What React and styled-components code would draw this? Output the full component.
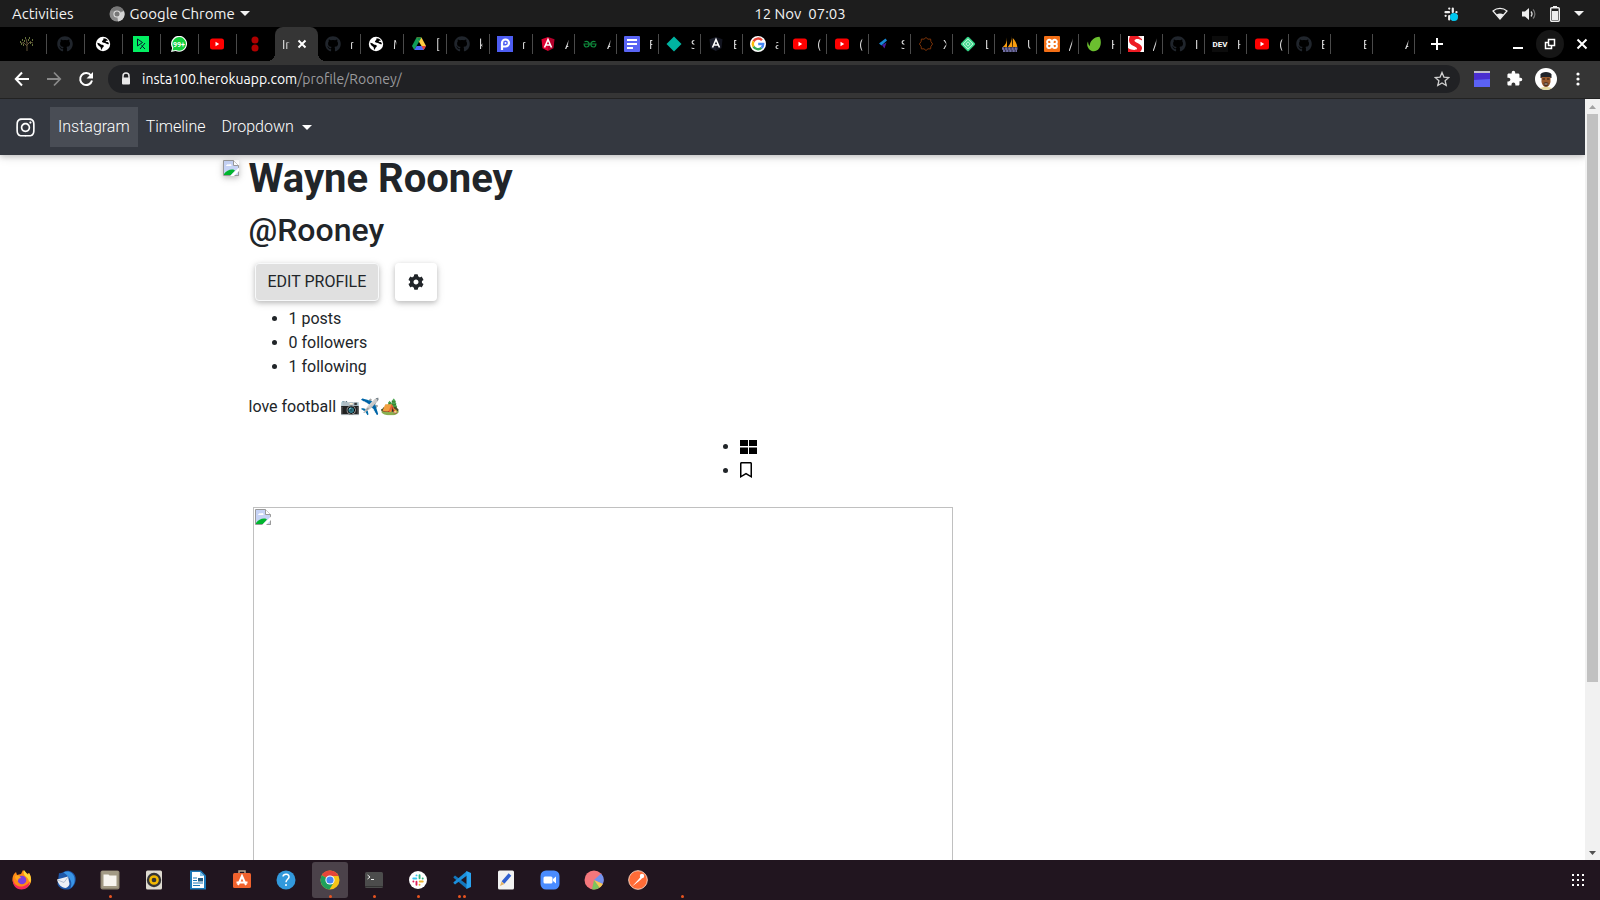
import React from "react";
import styled, { createGlobalStyle, css } from "styled-components";
import { FaGithub, FaInstagram, FaCog, FaRegBookmark } from "react-icons/fa";
import { MdExtension } from "react-icons/md";

const GlobalStyle = createGlobalStyle`
  *, *::before, *::after { box-sizing: border-box; }
  body { margin: 0; background: #fff; }
  button { font: inherit; color: inherit; border: 0; padding: 0; background: none; cursor: pointer; }
  svg { display: block; flex: none; }
`;

const uiFont = `Ubuntu, "Noto Sans", "Open Sans", sans-serif`;

const Desktop = styled.div`
  display: flex;
  flex-direction: column;
  height: 100vh;
  overflow: hidden;
  font-family: ${uiFont};
`;

/* ---------- system bar ---------- */

const SystemBar = styled.header`
  flex: none;
  display: grid;
  grid-template-columns: 1fr auto 1fr;
  align-items: center;
  height: 27px;
  padding: 0 12px;
  background: #1d1d1d;
  color: #f2f2f2;
  font-size: 15px;
  line-height: 20px;
`;

const SystemGroup = styled.div`
  display: flex;
  align-items: center;
  gap: ${(p) => p.$gap}px;
  justify-content: ${(p) => (p.$end ? "flex-end" : "flex-start")};
  padding-right: ${(p) => (p.$end ? 4 : 0)}px;
`;

const SystemButton = styled.button`
  display: flex;
  align-items: center;
  gap: 5px;
  white-space: pre;
`;

const TrayApp = styled.span`
  margin-right: 20px;
`;

/* ---------- tab strip ---------- */

const TabStrip = styled.div`
  flex: none;
  display: flex;
  align-items: stretch;
  height: 34px;
  padding-left: 9px;
  background: #000;
  color: #e4e4e4;
  font-size: 13px;
`;

const Tab = styled.button`
  flex: none;
  display: flex;
  align-items: center;
  gap: 9px;
  width: ${(p) => p.$width}px;
  height: 20px;
  margin-top: 7px;
  padding-left: ${(p) => (p.$pinned ? 10 : 7)}px;
  border-right: 1px solid ${(p) => (p.$last ? "transparent" : "#4a4a4a")};
`;

const TabLetter = styled.span`
  width: 4px;
  overflow: hidden;
  text-align: left;
  white-space: nowrap;
  mask-image: linear-gradient(to right, #000 60%, transparent);
`;

const ActiveTab = styled.div`
  flex: none;
  position: relative;
  display: flex;
  align-items: center;
  gap: 4px;
  width: 43px;
  padding-left: 7px;
  border-radius: 8px 8px 0 0;
  background: #353535;
  &::before, &::after {
    content: "";
    position: absolute;
    bottom: 0;
    width: 8px;
    height: 8px;
  }
  &::before { right: 100%; background: radial-gradient(circle at 0 0, #000 8px, #353535 8px); }
  &::after { left: 100%; background: radial-gradient(circle at 100% 0, #000 8px, #353535 8px); }
`;

const ActiveLetter = styled(TabLetter)`
  width: 8px;
`;

const IconButton = styled.button`
  flex: none;
  display: flex;
  align-items: center;
  justify-content: center;
  width: ${(p) => p.$size}px;
  height: ${(p) => p.$size}px;
  border-radius: 50%;
  color: ${(p) => p.$color || "#fff"};
  background: ${(p) => p.$bg || "transparent"};
`;

const NewTab = styled(IconButton)`
  align-self: center;
  margin-left: 8px;
`;

const WindowButtons = styled.div`
  display: flex;
  align-items: center;
  gap: 4px;
  margin-left: auto;
  padding-right: 4px;
`;

/* ---------- address bar ---------- */

const Toolbar = styled.div`
  flex: none;
  display: flex;
  align-items: center;
  gap: 4px;
  height: 38px;
  padding: 0 8px 2px;
  background: #353535;
  border-bottom: 1px solid #222;
`;

const Omnibox = styled.form`
  flex: 1;
  display: flex;
  align-items: center;
  height: 28px;
  margin: 0 4px;
  padding: 0 10px 0 12px;
  border-radius: 14px;
  background: #202124;
  color: #fff;
  font-size: 14px;
`;

const Address = styled.a`
  flex: 1;
  margin-left: 10px;
  color: #fff;
  line-height: 20px;
  text-decoration: none;
  span { color: #9a9a9d; }
`;

/* ---------- page ---------- */

const Viewport = styled.div`
  flex: 1;
  min-height: 0;
  display: flex;
`;

const Page = styled.main`
  flex: 1;
  min-width: 0;
  overflow: hidden;
  background: #fff;
  color: #212529;
  font-family: Roboto, sans-serif;
  font-size: 16px;
  line-height: 24px;
`;

const Navbar = styled.nav`
  position: relative;
  display: flex;
  align-items: center;
  height: 56px;
  padding: 0 15px;
  background: #343840;
  box-shadow: 0 2px 5px rgba(0, 0, 0, 0.16), 0 2px 10px rgba(0, 0, 0, 0.12);
  color: #fff;
`;

const Brand = styled.a`
  display: flex;
  margin-right: 14px;
  color: #fff;
`;

const NavLink = styled.a`
  display: flex;
  align-items: center;
  gap: 8px;
  padding: 8px;
  color: #fff;
  font-weight: 300;
  text-decoration: none;
  background: ${(p) => (p.$active ? "#494d55" : "transparent")};
`;

const Caret = styled.span`
  border: 5px solid transparent;
  border-top-color: currentColor;
  border-bottom: 0;
`;

const Container = styled.div`
  display: flex;
  gap: 10px;
  max-width: 1140px;
  margin: 0 auto;
`;

const Avatar = styled.div`
  flex: none;
  align-self: flex-start;
  margin-top: 5px;
  box-shadow: 0 2px 5px rgba(0, 0, 0, 0.16), 0 2px 10px rgba(0, 0, 0, 0.12);
`;

const Profile = styled.section`
  flex: 1;
  max-width: 960px;
`;

const Name = styled.h1`
  margin: 0 0 8px;
  font-size: 40px;
  font-weight: 700;
  line-height: 48px;
`;

const Handle = styled.h2`
  margin: 0 0 8px;
  font-size: 32px;
  font-weight: 500;
  line-height: 38px;
`;

const Actions = styled.div`
  display: flex;
  gap: 16px;
  padding: 6px;
`;

const ActionButton = styled.button`
  height: 38px;
  padding: 0 ${(p) => (p.$filled ? 12 : 13)}px;
  border-radius: 4px;
  box-shadow: 0 2px 5px rgba(0, 0, 0, 0.2), 0 2px 10px rgba(0, 0, 0, 0.1);
  ${(p) =>
    p.$filled &&
    css`
      && { background: #e0e0e0; border: 1px solid #f8f9fa; }
    `}
`;

const List = styled.ul`
  margin: 0 0 16px;
  padding-left: 40px;
`;

const Bio = styled.p`
  margin: 0 0 16px;
`;

const Views = styled.div`
  display: flex;
  justify-content: center;
`;

const ViewLink = styled.a`
  display: inline-flex;
  align-items: center;
  height: 22px;
  vertical-align: top;
  color: #000;
`;

const BookmarkIcon = styled(FaRegBookmark)`
  width: 12px;
  height: 16px;
`;

const Post = styled.figure`
  width: 700px;
  max-width: 100%;
  height: 700px;
  margin: 8px 4px;
  padding: 1px;
  border: 1px solid #c0c0c0;
`;

const Scrollbar = styled.div`
  flex: none;
  display: flex;
  flex-direction: column;
  width: 15px;
  background: #f1f1f1;
`;

const ScrollButton = styled.button`
  display: flex;
  align-items: center;
  justify-content: center;
  height: 15px;
  color: ${(p) => p.$color};
`;

const ScrollTrack = styled.div`
  flex: 1;
  padding: 0 2px;
`;

const ScrollThumb = styled.div`
  height: 77.7%;
  background: #c1c1c1;
`;

/* ---------- dock ---------- */

const Dock = styled.footer`
  flex: none;
  display: flex;
  align-items: center;
  gap: 8px;
  height: 40px;
  padding: 0 4px;
  background: #21151f;
`;

const DockItem = styled.button`
  position: relative;
  display: flex;
  align-items: center;
  justify-content: center;
  width: 36px;
  height: 36px;
  border-radius: 3px;
  background: ${(p) => (p.$active ? "#4b424a" : "transparent")};
`;

const Dots = styled.span`
  position: absolute;
  left: 0;
  right: 0;
  bottom: 0;
  display: flex;
  justify-content: center;
  gap: 2px;
  i { width: 3px; height: 3px; border-radius: 50%; background: #e95420; }
`;

const AppsButton = styled(DockItem)`
  margin-left: auto;
`;

/* ---------- drawings ---------- */

const Svg = ({ s = 16, v = 16, children }) => (
  <svg width={s} height={s} viewBox={`0 0 ${v} ${v}`} aria-hidden="true">{children}</svg>
);

const BrokenImage = () => (
  <Svg>
    <path d="M.5.5h10l5 5v10H.5z" fill="#c6d3f5" stroke="#9a9a9a" />
    <path d="M10.500 .5v5h5" fill="#fff" stroke="#9a9a9a" />
    <path d="M3 6a2 2 0 0 1 3-1.500A1.500 1.500 0 0 1 8.500 6z" fill="#fff" />
    <path d="M1 15v-1c2-3 5-4.500 8-4.500 1.500 0 2.500.5 3 1L8 15z" fill="#00b52e" />
    <path d="M7 16l9-8.500V11l-5 5z" fill="#fff" />
    <path d="M12 15.500h3.500V12" fill="none" stroke="#9a9a9a" />
  </Svg>
);

const Tree = () => (
  <Svg>
    <path d="M8 15V6M8 10L4 6M8 9l4-4M8 7L7 3M5 7H2M11 6l3 1" stroke="#5f5136" fill="none" />
    <path d="M3 4h1M6 2h1M10 2h1M13 4h1M2 8h1M13 9h1M5 5h1M9 4h1M11 7h1M4 9h1M1 6h1" stroke="#65723b" strokeWidth="2" strokeDasharray="1 1" />
  </Svg>
);
const GitHub = () => <FaGithub size={16} color="#20252c" />;
const Globe = () => (
  <Svg>
    <circle cx="8" cy="8" r="7.200" fill="#fff" />
    <path d="M2.200 6.800c1.500.2 2.800.8 3.800 1.600.9.300 2.200.2 2.800 1.200.3 1-.6 1.600-1.300 2.200-.4.700-.3 1.600-1 1.900-.7-.4-.6-1.500-.8-2.300C4.800 10.300 2.500 9.500 2.200 6.800z" fill="#000" />
    <path d="M8.500 2.200c1.800 0 3.400.9 4.400 2.200-.8.500-1.500.2-2.200.5-.2.900.9.900 1.700 1.100.9.300 1.500.9 1.400 2.200-.9.300-1.900.1-2.800-.6C9.800 6.800 7.700 6.900 7 5.800c-.3-.9.600-1.400 1.200-1.900.3-.5.100-1.100.3-1.700z" fill="#000" />
  </Svg>
);
const DataCamp = () => (
  <Svg>
    <path d="M0 0h16v16H0z" fill="#03ef62" />
    <path d="M4.500 10V3l5 3.500L4.500 10M7 13l5-6M12 13L8.500 9.500" stroke="#05192d" fill="none" />
  </Svg>
);
const WhatsApp = () => (
  <Svg>
    <path d="M0 16l1.200-4A8 8 0 1 1 4.500 15z" fill="#fff" />
    <path d="M1.500 14.500l.9-3A6.800 6.800 0 1 1 5 13.900z" fill="#12cf3c" />
    <text x="8" y="10.500" fontSize="7" fontWeight="700" fill="#fff" textAnchor="middle" fontFamily="Roboto, sans-serif">99+</text>
  </Svg>
);
const YouTube = () => (
  <Svg>
    <rect x="1" y="2.500" width="14" height="11" rx="2.500" fill="#f00" />
    <path d="M6.500 5.800v4.400L10.200 8z" fill="#fff" />
  </Svg>
);
const Twilio = () => (
  <Svg>
    <circle cx="8" cy="4" r="3.500" fill="#b00000" />
    <circle cx="8" cy="12" r="3.500" fill="#b00000" />
  </Svg>
);
const Drive = () => (
  <Svg>
    <path d="M5.500 1.500L1 10l2.300 4L8 5.700z" fill="#0f9d58" />
    <path d="M5.500 1.500h5L15 10h-4.500z" fill="#ffcd40" />
    <path d="M5.500 1.500h5L8 5.700z" fill="#0a8f4c" />
    <path d="M5.600 10H15l-2.300 4H3.300z" fill="#4b6bfb" />
    <path d="M10.500 10H15l-2.300 4z" fill="#ea4335" />
  </Svg>
);
const PLogo = () => (
  <Svg>
    <path d="M0 0h16v16H0z" fill="#4d5df2" />
    <path d="M5 14V7a3.500 3.500 0 1 1 3.500 3.500H5" stroke="#fff" strokeWidth="2.200" fill="none" />
    <circle cx="8.500" cy="7" r="1" fill="#fff" />
  </Svg>
);
const Shield = ({ left, right }) => (
  <Svg>
    <path d="M8 1L1.500 3.200l1 9L8 15z" fill={left} />
    <path d="M8 1l6.500 2.200-1 9L8 15z" fill={right} />
    <path d="M4.500 11.500L8 3.500l3.500 8M6 9h4" stroke="#fff" strokeWidth="1.600" fill="none" />
  </Svg>
);
const Geeks = () => (
  <Svg>
    <path d="M1.500 8h13M2.500 5.800c2-1 4.700-.2 4.700 2.200s-1.500 3-2.700 3S2 10 2.200 8M13.500 5.800c-2-1-4.700-.2-4.700 2.200s1.500 3 2.700 3 2.500-1 2.300-3" stroke="#0f8a3c" strokeWidth="1.200" fill="none" />
  </Svg>
);
const Docs = () => (
  <Svg>
    <rect width="16" height="16" rx="1" fill="#5964f4" />
    <path d="M3 4h10M3 8h10M3 12h6" stroke="#fff" strokeWidth="1.800" />
  </Svg>
);
const Diamond = () => <Svg><path d="M8 .5L15.500 8 8 15.500.5 8z" fill="#00b3a1" /></Svg>;
const Google = () => (
  <Svg>
    <circle cx="8" cy="8" r="8" fill="#fff" />
    <g fill="none" strokeWidth="2.400">
      <path d="M12 4.300A5.200 5.200 0 0 0 3.500 5.400" stroke="#ea4335" />
      <path d="M3.500 5.400a5.200 5.200 0 0 0 0 5.200" stroke="#fbbc05" />
      <path d="M3.500 10.600a5.200 5.200 0 0 0 8 1.300" stroke="#34a853" />
      <path d="M11.500 11.900C13 10.500 13.200 9.500 13.200 8H8.200" stroke="#4285f4" />
    </g>
  </Svg>
);
const Bolt = () => (
  <Svg>
    <path d="M9.500 2.500L3 7.500l2.500 2L11 4.500z" fill="#1689d8" />
    <path d="M10.500 6.500L6 9l1 1.500 1.500 2 .8-2.500z" fill="#4a1d9c" />
  </Svg>
);
const Star8 = () => (
  <Svg><path d="M8 1.500l2 1.700 2.600-.200.300 2.600L14.600 8l-1.700 2.300-.3 2.600-2.600-.1L8 14.500l-2-1.700-2.600.1-.3-2.600L1.400 8l1.700-2.400L3.400 3l2.600.2z" fill="none" stroke="#7a3208" /></Svg>
);
const GreenDiamond = () => (
  <Svg>
    <rect x="2.500" y="2.500" width="11" height="11" rx="1.500" transform="rotate(45 8 8)" fill="#2fd283" />
    <rect x="4.500" y="4.500" width="7" height="7" transform="rotate(45 8 8)" fill="none" stroke="#baf3d6" />
    <rect x="6.500" y="6.500" width="3" height="3" transform="rotate(45 8 8)" fill="none" stroke="#baf3d6" />
  </Svg>
);
const Sails = () => (
  <Svg>
    <path d="M5 1.500C5 6 3.500 9 .8 11H5zM9.500 0C10 4 8.500 8 5.800 11h4.500zM10.800 2c2.500 2.500 4 5.500 4.500 9h-4.500z" fill="#f89c0e" />
    <path d="M0 12.500h16M1 15h14" stroke="#6f6da3" strokeWidth="2.400" strokeDasharray="2.500 .6" />
  </Svg>
);
const Xampp = () => (
  <Svg>
    <rect width="16" height="16" rx="1" fill="#f36f16" />
    <path d="M7 8H5.200a2.100 2.100 0 1 1 2.100-2.100V10a2.100 2.100 0 1 1-2.100-2.100M9 8h1.800a2.100 2.100 0 1 0-2.100-2.100V10a2.100 2.100 0 1 0 2.100-2.100" fill="none" stroke="#fff" strokeWidth="1.900" />
  </Svg>
);
const Leaf = () => (
  <Svg>
    <path d="M13.500.8c1.800 3.500 2 8.500-.5 11.800-2.200 3-6.500 3.300-9 1.300C1 11.300.6 8 2 5.500c.2 2 .7 3.500 1.800 4.500C3.600 5.300 8 1 13.500.8z" fill="#6bbf2f" />
  </Svg>
);
const RedS = () => (
  <Svg>
    <path d="M0 0h16v16H0z" fill="#fff" />
    <path d="M2 0h12v4.500C11 2.500 7 2.500 6.500 4.500S15 8 14 12.500c-.3 1.500-1 2.500-2 3.500H0v-4c4 2.500 8.500 2.500 9 .8C9.500 10.500 1 10 1 4.500 1 2.500 1.500 1 2 0z" fill="#ed1c24" />
    <path d="M10 0h6v5z" fill="#fff" opacity=".9" />
  </Svg>
);
const Dev = () => (
  <Svg>
    <rect width="16" height="16" fill="#0c0c0c" />
    <text x="8" y="11" fontSize="8" fontWeight="700" fill="#fff" textAnchor="middle" fontFamily="Roboto, sans-serif">DEV</text>
  </Svg>
);
const Blank = () => <Svg />;

const pinned = [
  ["Tree", Tree], ["GitHub", GitHub], ["Web", Globe], ["DataCamp", DataCamp],
  ["WhatsApp", WhatsApp], ["YouTube", YouTube], ["Console", Twilio],
];

const AngularRed = () => <Shield left="#dd0031" right="#b3002b" />;
const AngularDark = () => <Shield left="#1b1e2b" right="#12141f" />;

const tabs = [
  [GitHub, "r"], [Globe, "M"], [Drive, "["], [GitHub, "k"], [PLogo, "r"],
  [AngularRed, "A"], [Geeks, "A"], [Docs, "F"], [Diamond, "S"], [AngularDark, "E"],
  [Google, "a"], [YouTube, "("], [YouTube, "("], [Bolt, "S"], [Star8, "X"],
  [GreenDiamond, "L"], [Sails, "U"], [Xampp, "/"], [Leaf, "H"], [RedS, "/"],
  [GitHub, "I"], [Dev, "H"], [YouTube, "("], [GitHub, "E"], [Blank, "E"], [Blank, "A"],
];

const SlackTray = () => (
  <Svg s={14} v={14}>
    <g strokeWidth="2.200" strokeLinecap="round" stroke="#eee">
      <path d="M1.500 5.200H5M5.200 1.600h.1M8.800 1.500V5M12.400 5.200h.1M9 8.800h3.500M8.800 12.400v.1M5.200 9v3.500M1.600 8.800h.1" />
    </g>
    <circle cx="10" cy="10" r="4" fill="#00c8f0" />
  </Svg>
);

const ChromeGray = () => (
  <Svg>
    <circle cx="8" cy="8" r="7.500" fill="#8a8a8a" />
    <path d="M8 8l7-3a7.500 7.500 0 0 1-6 10.400z" fill="#d4d4d4" />
    <path d="M1.500 4.500A7.500 7.500 0 0 1 15 5H8z" fill="#777" />
    <circle cx="8" cy="8" r="3.600" fill="#ddd" />
    <circle cx="8" cy="8" r="2.500" fill="#777" />
  </Svg>
);

const Triangle = () => <svg width="10" height="5" viewBox="0 0 10 5"><path d="M0 0h10L5 5z" fill="#f2f2f2" /></svg>;

const Firefox = () => (
  <Svg s={20} v={20}>
    <path d="M2 4l2-2 1 3 4-1 2-4 4 4 2-1c2 3 2.500 6 2 9a9.500 9.500 0 0 1-18.500-1C.2 8 .8 6 2 4z" fill="#ff8a16" />
    <path d="M12 0c1 2 3 3 4 5l1-2c3 5 2 9 0 12 1-5-2-8-4-9-1-2-2-3-1-6z" fill="#ffd93a" />
    <path d="M1 8c0 7 6 10 11 8 3-1 5-3 6-5 0 5-4 8.500-8.500 8.500C4 19.500 0 15 1 8z" fill="#f5285c" />
    <circle cx="10" cy="10" r="4.300" fill="#7a3fe0" />
    <path d="M3 6c3-1 5 0 6 2-2 0-3 1-3 3-2-1-3-3-3-5z" fill="#ffa91f" />
  </Svg>
);
const Thunderbird = () => (
  <Svg s={20} v={20}>
    <path d="M3 3c2 .5 3 0 4.500-1C12-.8 18 1.500 19.500 7c1 5-1.500 10-6 12.200C8.500 20.500 3 18.500 1.500 14z" fill="#1d57a8" />
    <path d="M7.500 2.500c5-2.500 10 .5 11 5.500.7 4-1 8-4 10 2-4.500 1-10-7-15.500z" fill="#3a95e6" />
    <path d="M1 9.500L12 6.500l1.500 7.500c-.5 2-2 3.500-4 4-4-.5-7-3-8.500-8.500z" fill="#eef1f5" />
    <path d="M1.500 10l6.500 2.500 4-5.500" fill="none" stroke="#b3bfd0" />
  </Svg>
);
const Files = () => (
  <Svg s={20} v={20}>
    <rect x=".5" y=".5" width="19" height="19" rx="2" fill="#8b836f" />
    <rect x="1.500" y="1" width="17" height="17" rx="1" fill="#a29a85" />
    <path d="M3.500 4.500h5l1 1h7V16h-13z" fill="#f7f5f0" />
  </Svg>
);
const Speaker = () => (
  <Svg s={20} v={20}>
    <rect x="2" y=".5" width="16" height="19" rx="1.500" fill="#dedad0" />
    <circle cx="10" cy="10" r="7.200" fill="#353535" />
    <circle cx="10" cy="10" r="3.600" fill="none" stroke="#f2b800" strokeWidth="2.500" />
  </Svg>
);
const Writer = () => (
  <Svg s={20} v={20}>
    <path d="M2 .5h11l5 5v14H2z" fill="#1c79b8" />
    <path d="M4 2h8l4 4v12H4z" fill="#fff" />
    <path d="M12 2l4 4h-4z" fill="#7fc3ea" />
    <path d="M5 8h4M5 10.500h4M5 13h10M5 15.500h7" stroke="#1c79b8" />
    <rect x="10" y="8" width="5" height="3.500" fill="#235a80" />
  </Svg>
);
const Software = () => (
  <Svg s={20} v={20}>
    <path d="M7 3V1h6v2" stroke="#b9a58f" fill="none" strokeWidth="1.500" />
    <rect x="1" y="3" width="18" height="15" rx="1.500" fill="#f0622d" />
    <path d="M6 15l4-9 4 9M4.500 12.500h11" stroke="#fff" strokeWidth="2" fill="none" />
  </Svg>
);
const Help = () => (
  <Svg s={20} v={20}>
    <circle cx="10" cy="10" r="9.500" fill="#3299dc" />
    <path d="M7 6.500c.5-3 6.500-3 6 .7-.3 2-3 2.300-3 5M10 14v2" stroke="#fff" strokeWidth="1.500" fill="none" />
  </Svg>
);
const Chrome = () => (
  <Svg s={20} v={20}>
    <circle cx="10" cy="10" r="9.500" fill="#f5c518" />
    <path d="M10 10L1.800 5.200A9.500 9.500 0 0 1 18.500 6H10z" fill="#e5453a" />
    <path d="M10 10L1.800 5.200A9.500 9.500 0 0 0 9.500 19.500L14 12z" fill="#1fa05a" />
    <circle cx="10" cy="10" r="4.600" fill="#fff" />
    <circle cx="10" cy="10" r="3.600" fill="#4285f4" />
  </Svg>
);
const Terminal = () => (
  <Svg s={20} v={20}>
    <rect x="1" y="2" width="18" height="16" rx="1.500" fill="#4c4c4c" />
    <path d="M1 16.500h18" stroke="#333" />
    <path d="M3.500 5l2.500 2-2.500 2M7 9.500h3" stroke="#eee" fill="none" />
  </Svg>
);
const SlackDisc = () => (
  <Svg s={20} v={20}>
    <circle cx="10" cy="10" r="9" fill="#fff" />
    <g transform="translate(4 4) scale(.86)" strokeWidth="2.200" strokeLinecap="round">
      <path d="M1.500 5.200H5M5.200 1.600h.1" stroke="#36c5f0" />
      <path d="M8.800 1.500V5M12.400 5.200h.1" stroke="#2eb67d" />
      <path d="M9 8.800h3.500M8.800 12.400v.1" stroke="#ecb22e" />
      <path d="M5.200 9v3.500M1.600 8.800h.1" stroke="#e01e5a" />
    </g>
  </Svg>
);
const Code = () => (
  <Svg s={20} v={20}>
    <path d="M1.500 7L3 5.500 15 14.500V19L1.500 7.700z" fill="#1377bd" />
    <path d="M1.500 13L3 14.500 15 5.500V1L1.500 12.300z" fill="#1b8fdc" />
    <path d="M14.500 1L19 3v14l-4.500 2z" fill="#2aa3f0" />
  </Svg>
);
const Editor = () => (
  <Svg s={20} v={20}>
    <rect x="2" y=".5" width="16" height="19" rx="1.500" fill="#f2f2f2" />
    <path d="M7 12.500L14 4.500" stroke="#2f5fd0" strokeWidth="3.500" />
    <path d="M4 16l1.500-4.500 3 2.500z" fill="#e2b469" />
  </Svg>
);
const Zoom = () => (
  <Svg s={20} v={20}>
    <rect x=".5" y=".5" width="19" height="19" rx="5.500" fill="#4a8cff" />
    <rect x="3.500" y="6.500" width="9" height="7" rx="1.500" fill="#fff" />
    <path d="M13 9l3-2.500v7L13 11z" fill="#fff" />
  </Svg>
);
const Pie = () => (
  <Svg s={20} v={20}>
    <circle cx="10" cy="10" r="9.500" fill="#f4777c" />
    <path d="M10 10l7-6.400A9.500 9.500 0 0 1 18.800 14z" fill="#7391ee" />
    <path d="M10 10l8.800 4A9 9 0 0 1 15.500 17.800z" fill="#f2cb57" />
    <path d="M10 10l5.500 7.800A9.500 9.500 0 0 1 8 19.300z" fill="#7cc55c" />
  </Svg>
);
const Postman = () => (
  <Svg s={20} v={20}>
    <circle cx="10" cy="10" r="9.300" fill="#ff6c37" stroke="#f7cdb8" />
    <path d="M4 16.500l6-6.500 2.500-3 1.500 1.500-3.500 3z" fill="#fff" />
    <circle cx="14" cy="6" r="2.200" fill="#fff" />
  </Svg>
);

const apps = [
  ["Firefox", Firefox, 0], ["Thunderbird", Thunderbird, 0], ["Files", Files, 1],
  ["Rhythmbox", Speaker, 0], ["Writer", Writer, 0], ["Software", Software, 0],
  ["Help", Help, 0], ["Chrome", Chrome, 1], ["Terminal", Terminal, 1],
  ["Slack", SlackDisc, 1], ["Code", Code, 2], ["Text Editor", Editor, 0],
  ["Zoom", Zoom, 0], ["Disk Usage", Pie, 0], ["Postman", Postman, 0],
  ["Background app", Blank, 1],
];

const Stroke = ({ s = 16, d, w = 2 }) => (
  <Svg s={s} v={16}><path d={d} fill="none" stroke="currentColor" strokeWidth={w} /></Svg>
);

export default function App() {
  return (
    <Desktop>
      <GlobalStyle />
      <SystemBar>
        <SystemGroup $gap={35}>
          <SystemButton>Activities</SystemButton>
          <SystemButton><ChromeGray />Google Chrome<Triangle /></SystemButton>
        </SystemGroup>
        <SystemButton>12 Nov  07:03</SystemButton>
        <SystemGroup $gap={14} $end>
          <TrayApp><SlackTray /></TrayApp>
          <svg width="16" height="14" viewBox="0 0 16 14">
            <path d="M1 4c4-3.500 10-3.500 14 0l-7 8z" fill="none" stroke="#eee" strokeWidth="1.200" />
            <path d="M4.500 7.500c2-1.500 5-1.500 7 0L8 12z" fill="#eee" />
          </svg>
          <svg width="14" height="14" viewBox="0 0 14 14">
            <path d="M0 4.500h3L7 1v12L3 9.500H0z" fill="#eee" />
            <path d="M9 4.500c1.300 1.500 1.300 3.500 0 5" fill="none" stroke="#ddd" strokeWidth="1.200" />
            <path d="M11 2.500c2.500 2.500 2.500 6.500 0 9" fill="none" stroke="#777" strokeWidth="1.200" />
          </svg>
          <svg width="10" height="16" viewBox="0 0 10 16">
            <path d="M3 0h4v2H3z" fill="#eee" />
            <rect x=".7" y="1.700" width="8.600" height="13.600" rx="1" fill="none" stroke="#eee" strokeWidth="1.400" />
            <path d="M2 5h6v9H2z" fill="#eee" />
          </svg>
          <Triangle />
        </SystemGroup>
      </SystemBar>

      <TabStrip>
        {pinned.map(([name, Icon], i) => (
          <Tab key={name} $pinned $width={38} $last={i === pinned.length - 1} aria-label={name}><Icon /></Tab>
        ))}
        <ActiveTab>
          <ActiveLetter>In</ActiveLetter>
          <IconButton $size={16} aria-label="Close tab"><Stroke s={16} d="M4.500 4.500l7 7M11.500 4.500l-7 7" /></IconButton>
        </ActiveTab>
        {tabs.map(([Icon, letter], i) => (
          <Tab key={i} $width={i < 5 ? 43 : 42}><Icon /><TabLetter>{letter}</TabLetter></Tab>
        ))}
        <NewTab $size={28} aria-label="New tab"><Stroke d="M8 2v12M2 8h12" /></NewTab>
        <WindowButtons>
          <IconButton $size={28} aria-label="Minimise"><Stroke d="M3 12h10" /></IconButton>
          <IconButton $size={28} $bg="#161616" aria-label="Restore">
            <Stroke d="M6.500 3.500h6v6h-6zM6 6.500H3.500v6h6V10" w={1.5} />
          </IconButton>
          <IconButton $size={28} aria-label="Close"><Stroke d="M3.500 3.500l9 9M12.500 3.500l-9 9" /></IconButton>
        </WindowButtons>
      </TabStrip>

      <Toolbar>
        <IconButton $size={28} aria-label="Back"><Stroke d="M15 8H2M8 1.500L1.800 8 8 14.500" /></IconButton>
        <IconButton $size={28} $color="#8a8a8a" aria-label="Forward"><Stroke d="M1 8h13M8 1.500L14.200 8 8 14.500" w={1.8} /></IconButton>
        <IconButton $size={28} aria-label="Reload">
          <Svg s={16}>
            <path d="M13 4.500A6 6 0 1 0 14 9.500" fill="none" stroke="currentColor" strokeWidth="2" />
            <path d="M15 1v6.500H8.500z" fill="currentColor" />
          </Svg>
        </IconButton>
        <Omnibox>
          <svg width="12" height="14" viewBox="0 0 12 14">
            <path d="M3 6V4a3 3 0 0 1 6 0v2" fill="none" stroke="#e8e8e8" strokeWidth="1.500" />
            <rect x="2" y="5.500" width="8" height="7" rx="1" fill="#e8e8e8" />
          </svg>
          <Address href="#profile">insta100.herokuapp.com<span>/profile/Rooney/</span></Address>
          <Svg s={16}>
            <path d="M8 1.500l1.900 4.600 4.900.4-3.700 3.200 1.100 4.800L8 11.900l-4.200 2.600 1.100-4.800L1.200 6.500l4.900-.4z" fill="none" stroke="#d0d0d0" strokeWidth="1.300" />
          </Svg>
        </Omnibox>
        <IconButton $size={28} aria-label="Extension">
          <Svg s={16}>
            <path d="M0 0h16v3H0z" fill="#bfbccb" />
            <path d="M0 2h16v7H0z" fill="#4a2ed0" />
            <path d="M0 9l16-1v8H0z" fill="#5b62f5" />
          </Svg>
        </IconButton>
        <IconButton $size={28} aria-label="Extensions"><MdExtension size={17} /></IconButton>
        <IconButton $size={28} aria-label="Account">
          <Svg s={22} v={22}>
            <circle cx="11" cy="11" r="11" fill="#fff" />
            <path d="M5.500 10V6.500C6 3 16 3 16.500 6.500V10z" fill="#20242a" />
            <path d="M6.500 9h9v5c-.5 3-2.500 5-4.500 5s-4-2-4.500-5z" fill="#9a5b2e" />
            <path d="M7.500 11h2.500M12 11h2.500" stroke="#2a1a10" />
            <path d="M8.500 15c1-1 4-1 5 0l-.5 2.500c-1 1-3 1-4 0z" fill="#4a2d1c" />
            <path d="M9.500 16h3" stroke="#bbb" />
            <path d="M5 20c3-1.500 9-1.500 12 0-3 2.500-9 2.500-12 0z" fill="#e3d9a0" />
          </Svg>
        </IconButton>
        <IconButton $size={28} aria-label="Menu">
          <svg width="4" height="14" viewBox="0 0 4 14" fill="#fff"><circle cx="2" cy="2" r="1.600" /><circle cx="2" cy="7" r="1.600" /><circle cx="2" cy="12" r="1.600" /></svg>
        </IconButton>
      </Toolbar>

      <Viewport>
        <Page>
          <Navbar>
            <Brand href="#home" aria-label="Home"><FaInstagram size={21} /></Brand>
            <NavLink href="#instagram" $active>Instagram</NavLink>
            <NavLink href="#timeline">Timeline</NavLink>
            <NavLink href="#dropdown">Dropdown <Caret /></NavLink>
          </Navbar>
          <Container>
            <Avatar><BrokenImage /></Avatar>
            <Profile>
              <Name>Wayne Rooney</Name>
              <Handle>@Rooney</Handle>
              <Actions>
                <ActionButton $filled>EDIT PROFILE</ActionButton>
                <ActionButton aria-label="Settings"><FaCog size={16} /></ActionButton>
              </Actions>
              <List>
                <li>1 posts</li>
                <li>0 followers</li>
                <li>1 following</li>
              </List>
              <Bio>love football 📷✈️🏕️</Bio>
              <Views>
                <List>
                  <li>
                    <ViewLink href="#posts" aria-label="Posts">
                      <Svg s={17} v={17}><path d="M0 2h8v6H0zM9 2h8v6H9zM0 9.500h8v6.500H0zM9 9.500h8v6.500H9z" fill="#000" /></Svg>
                    </ViewLink>
                  </li>
                  <li><ViewLink href="#saved" aria-label="Saved"><BookmarkIcon /></ViewLink></li>
                </List>
              </Views>
              <Post><BrokenImage /></Post>
            </Profile>
          </Container>
        </Page>
        <Scrollbar>
          <ScrollButton $color="#a3a3a3" aria-label="Scroll up"><svg width="7" height="4" viewBox="0 0 7 4"><path d="M0 4h7L3.500 0z" fill="currentColor" /></svg></ScrollButton>
          <ScrollTrack><ScrollThumb /></ScrollTrack>
          <ScrollButton $color="#505050" aria-label="Scroll down"><svg width="7" height="4" viewBox="0 0 7 4"><path d="M0 0h7L3.500 4z" fill="currentColor" /></svg></ScrollButton>
        </Scrollbar>
      </Viewport>

      <Dock>
        {apps.map(([name, Icon, dots]) => (
          <DockItem key={name} $active={name === "Chrome"} aria-label={name}>
            <Icon />
            <Dots>{Array.from({ length: dots }, (_, i) => <i key={i} />)}</Dots>
          </DockItem>
        ))}
        <AppsButton aria-label="Show applications">
          <Svg s={14} v={14}>
            <path d="M1 2h2M6 2h2M11 2h2M1 7h2M6 7h2M11 7h2M1 12h2M6 12h2M11 12h2" stroke="#fff" strokeWidth="2" />
          </Svg>
        </AppsButton>
      </Dock>
    </Desktop>
  );
}
